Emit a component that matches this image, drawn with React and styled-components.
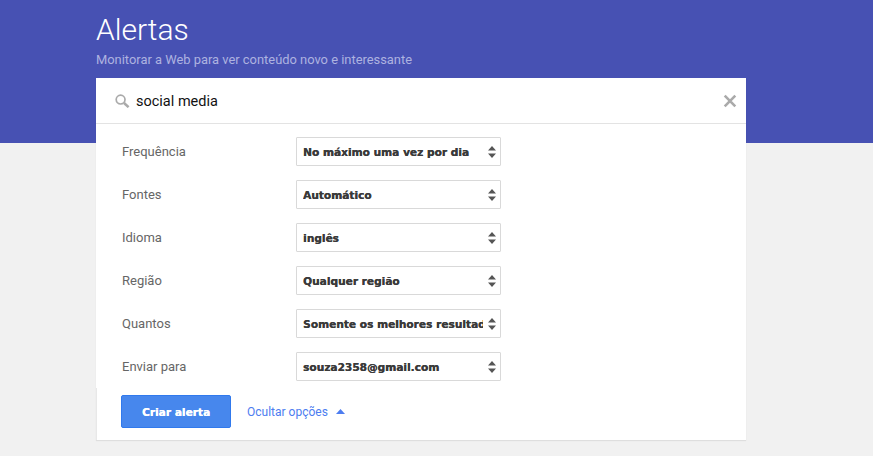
import React from "react";
import styled, { createGlobalStyle } from "styled-components";

const Global = createGlobalStyle`
  html, body {
    margin: 0;
    padding: 0;
    background: #f1f1f1;
    font-family: Roboto, "Liberation Sans", sans-serif;
  }
`;

const Page = styled.div`
  width: 873px;
  height: 456px;
  overflow: hidden;
`;

const Banner = styled.header`
  height: 143px;
  box-sizing: border-box;
  background: #4751b3;
  padding: 11px 96px 0;
`;

const Title = styled.h1`
  margin: 0;
  font-size: 30px;
  line-height: 38px;
  font-weight: 300;
  color: #fff;
`;

const Subtitle = styled.p`
  margin: 2px 0 0;
  font-size: 12.9px;
  line-height: 18px;
  color: #aeb3e0;
`;

const Card = styled.section`
  width: 650px;
  margin: -65px 0 0 96px;
  background: #fff;
  box-shadow: 0 1px 1px rgba(0, 0, 0, 0.08);
`;

const SearchBar = styled.div`
  height: 44px;
  display: flex;
  align-items: center;
  gap: 6px;
  padding: 1px 9px 0 19px;
  border-bottom: 1px solid #e3e3e3;
`;

const Query = styled.span`
  flex: 1;
  font-size: 14.5px;
  color: #111;
`;

const Options = styled.div`
  display: flex;
  flex-direction: column;
  gap: 14px;
  padding: 13px 0 7px 26px;
`;

const Row = styled.div`
  display: flex;
  align-items: center;
`;

const Label = styled.span`
  width: 174px;
  font-size: 13px;
  color: #666;
`;

const Select = styled.div`
  width: 205px;
  height: 29px;
  box-sizing: border-box;
  display: flex;
  align-items: center;
  gap: 5px;
  padding: 0 4px 0 6px;
  border: 1px solid #d9d9d9;
  border-radius: 1px;
  background: #fff;
`;

const SelectText = styled.span`
  flex: 1;
  overflow: hidden;
  white-space: nowrap;
  font-family: "DejaVu Sans", Verdana, sans-serif;
  font-size: 10.6px;
  font-weight: 700;
  color: #3a3a3a;
  text-shadow: 0.3px 0 0 #3a3a3a;
`;

const Actions = styled.div`
  display: flex;
  align-items: center;
  gap: 16px;
  padding: 7px 0 12px 24px;
  border-left: 1px solid #e8e8e8;
`;

const CreateButton = styled.button`
  width: 110px;
  height: 33px;
  padding: 0;
  border: 1px solid #3079ed;
  border-radius: 2px;
  background: #4787ed;
  color: #fff;
  font-family: "DejaVu Sans", Verdana, sans-serif;
  font-size: 10.6px;
  font-weight: 700;
  text-shadow: 0.3px 0 0 #fff;
`;

const ToggleLink = styled.a`
  display: flex;
  align-items: center;
  gap: 8px;
  font-size: 12px;
  color: #4d7df0;
`;

const SearchIcon = () => (
  <svg width="15" height="14" viewBox="0 0 15 14" fill="none" stroke="#aaa">
    <circle cx="5.6" cy="5.6" r="4.4" strokeWidth="1.7" />
    <path d="M9 9l4.6 4.2" strokeWidth="2.5" />
  </svg>
);

const CloseIcon = () => (
  <svg width="14" height="14" viewBox="0 0 14 14" stroke="#aaa" strokeWidth="2.6">
    <path d="M1.7 1.7l10.6 10.6M12.3 1.7L1.7 12.3" />
  </svg>
);

const Arrows = () => (
  <svg width="8" height="12" viewBox="0 0 8 12" fill="#555">
    <path d="M4 0l4 4.6H0zM4 12L0 7.4h8z" />
  </svg>
);

const Caret = () => (
  <svg width="9" height="5" viewBox="0 0 9 5" fill="#4d7df0">
    <path d="M4.5 0L9 5H0z" />
  </svg>
);

const options = [
  ["Frequência", "No máximo uma vez por dia"],
  ["Fontes", "Automático"],
  ["Idioma", "inglês"],
  ["Região", "Qualquer região"],
  ["Quantos", "Somente os melhores resultados"],
  ["Enviar para", "souza2358@gmail.com"],
];

export default function App() {
  return (
    <Page>
      <Global />
      <Banner>
        <Title>Alertas</Title>
        <Subtitle>Monitorar a Web para ver conteúdo novo e interessante</Subtitle>
      </Banner>
      <Card>
        <SearchBar>
          <SearchIcon />
          <Query>social media</Query>
          <CloseIcon />
        </SearchBar>
        <Options>
          {options.map(([label, value]) => (
            <Row key={label}>
              <Label>{label}</Label>
              <Select>
                <SelectText>{value}</SelectText>
                <Arrows />
              </Select>
            </Row>
          ))}
        </Options>
        <Actions>
          <CreateButton>Criar alerta</CreateButton>
          <ToggleLink>
            Ocultar opções <Caret />
          </ToggleLink>
        </Actions>
      </Card>
    </Page>
  );
}
